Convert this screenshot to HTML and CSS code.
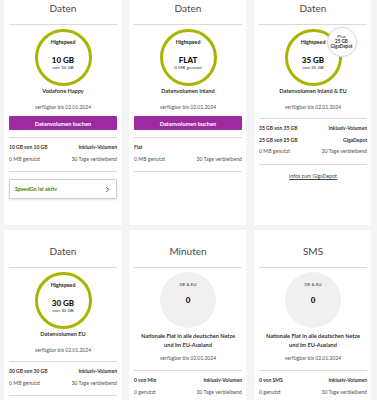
FILE: index.html
```html
<!DOCTYPE html>
<html lang="de">
<head>
<meta charset="utf-8">
<title>Tarif</title>
<link rel="stylesheet" href="styles.css">
</head>
<body>
<main class="grid">
  <section class="card">
    <h2 class="card-title">Daten</h2>
    <div class="ring">
      <span class="ring-label">Highspeed</span>
      <span class="ring-value">10 GB</span>
      <span class="ring-sub">von 10 GB</span>
    </div>
    <p class="plan">Vodafone Happy</p>
    <p class="avail">verfügbar bis 02.01.2024</p>
    <button class="buy">Datenvolumen buchen</button>
    <div class="stats">
      <div class="stat-row strong"><span>10 GB von 10 GB</span><span>Inklusiv-Volumen</span></div>
      <div class="stat-row"><span>0 MB genutzt</span><span>30 Tage verbleibend</span></div>
    </div>
    <a class="speedgo" href="#"><span>SpeedGo ist aktiv</span>
      <svg class="chev" viewBox="0 0 6 8" width="5" height="7"><path d="M1.5 1l3 3-3 3" fill="none" stroke="#333" stroke-width="1"/></svg>
    </a>
  </section>

  <section class="card">
    <h2 class="card-title">Daten</h2>
    <div class="ring">
      <span class="ring-label">Highspeed</span>
      <span class="ring-value">FLAT</span>
      <span class="ring-sub">0 MB genutzt</span>
    </div>
    <p class="plan">Datenvolumen Inland</p>
    <p class="avail">verfügbar bis 02.01.2024</p>
    <button class="buy">Datenvolumen buchen</button>
    <div class="stats">
      <div class="stat-row strong"><span>Flat</span></div>
      <div class="stat-row"><span>0 MB genutzt</span><span>30 Tage verbleibend</span></div>
    </div>
  </section>

  <section class="card">
    <h2 class="card-title">Daten</h2>
    <div class="ring">
      <span class="ring-label">Highspeed</span>
      <span class="ring-value">35 GB</span>
      <span class="ring-sub">von 35 GB</span>
      <span class="badge">Plus<br><b>25 GB</b><br><b>GigaDepot</b></span>
    </div>
    <p class="plan">Datenvolumen Inland &amp; EU</p>
    <p class="avail">verfügbar bis 02.01.2024</p>
    <div class="stats">
      <div class="stat-row strong"><span>35 GB von 35 GB</span><span>Inklusiv-Volumen</span></div>
      <div class="stat-row strong"><span>25 GB von 25 GB</span><span>GigaDepot</span></div>
      <div class="stat-row"><span>0 MB genutzt</span><span>30 Tage verbleibend</span></div>
    </div>
    <a class="info-link" href="#">Infos zum GigaDepot</a>
  </section>

  <section class="card">
    <h2 class="card-title">Daten</h2>
    <div class="ring">
      <span class="ring-label">Highspeed</span>
      <span class="ring-value">30 GB</span>
      <span class="ring-sub">von 30 GB</span>
    </div>
    <p class="plan">Datenvolumen EU</p>
    <p class="avail">verfügbar bis 02.01.2024</p>
    <div class="stats">
      <div class="stat-row strong"><span>30 GB von 30 GB</span><span>Inklusiv-Volumen</span></div>
      <div class="stat-row"><span>0 MB genutzt</span><span>30 Tage verbleibend</span></div>
    </div>
  </section>

  <section class="card">
    <h2 class="card-title">Minuten</h2>
    <div class="disc">
      <span class="disc-label">DE &amp; EU</span>
      <span class="disc-value">0</span>
    </div>
    <p class="plan plan-two">Nationale Flat in alle deutschen Netze und im EU-Ausland</p>
    <p class="avail avail-two">verfügbar bis 02.01.2024</p>
    <div class="stats stats-two">
      <div class="stat-row strong"><span>0 von Min</span><span>Inklusiv-Volumen</span></div>
      <div class="stat-row"><span>0 genutzt</span><span>30 Tage verbleibend</span></div>
    </div>
  </section>

  <section class="card">
    <h2 class="card-title">SMS</h2>
    <div class="disc">
      <span class="disc-label">DE &amp; EU</span>
      <span class="disc-value">0</span>
    </div>
    <p class="plan plan-two">Nationale Flat in alle deutschen Netze und im EU-Ausland</p>
    <p class="avail avail-two">verfügbar bis 02.01.2024</p>
    <div class="stats stats-two">
      <div class="stat-row strong"><span>0 von SMS</span><span>Inklusiv-Volumen</span></div>
      <div class="stat-row"><span>0 genutzt</span><span>30 Tage verbleibend</span></div>
    </div>
  </section>
</main>
</body>
</html>
```
FILE: styles.css
```css
* { box-sizing: border-box; }
html, body {
  margin: 0;
  padding: 0;
  background: #f4f4f4;
  font-family: Lato, "Open Sans", sans-serif;
  color: #333;
  overflow: hidden;
}
.grid {
  display: grid;
  grid-template-columns: 117px 117px 117px;
  column-gap: 8px;
  row-gap: 5px;
  padding-left: 4px;
  margin-top: -13px;
  align-items: stretch;
}
.card {
  background: #fff;
  padding: 0 4px 26px 5px;
  display: flex;
  flex-direction: column;
  align-items: stretch;
  min-height: 238px;
}
.card-title {
  margin: 0;
  padding: 14px 0 9px;
  height: 38px;
  line-height: 14px;
  font-size: 10px;
  font-weight: 400;
  text-align: center;
  color: #4a4a4a;
  border-bottom: 1px solid #d9d9d9;
}
.ring {
  position: relative;
  align-self: center;
  width: 57px;
  height: 57px;
  margin-top: 4px;
  border: 3.5px solid #a8b400;
  border-radius: 50%;
  padding-top: 6.5px;
  display: flex;
  flex-direction: column;
  align-items: center;
}
.ring-label {
  font-size: 5.2px;
  line-height: 6px;
  font-weight: 700;
  margin-bottom: 11.5px;
  color: #222;
}
.ring-value {
  font-size: 8px;
  line-height: 9px;
  font-weight: 900;
  color: #111;
}
.ring-sub {
  font-size: 4.6px;
  line-height: 5px;
  color: #333;
}
.badge {
  position: absolute;
  left: 39px;
  top: -5px;
  width: 30px;
  height: 30px;
  border-radius: 50%;
  background: #fff;
  border: 1px solid #dcdcdc;
  box-shadow: 0 0 2px rgba(0,0,0,0.1);
  font-size: 4.6px;
  line-height: 5.4px;
  text-align: center;
  padding-top: 5.5px;
  color: #333;
}
.badge b { font-weight: 700; }
.plan {
  margin: 1px 0 0;
  font-size: 5.6px;
  line-height: 8px;
  font-weight: 700;
  text-align: center;
  color: #333;
}
.plan-two {
  margin-top: 2.5px;
  line-height: 9px;
  padding: 0 2px;
}
.avail {
  margin: 8px 0 0;
  font-size: 5.1px;
  line-height: 8px;
  text-align: center;
  color: #555;
}
.avail-two { margin-top: 5.5px; }
.buy {
  margin-top: 5px;
  height: 14px;
  border: 0;
  border-radius: 1px;
  background: #9c2aa0;
  color: #fff;
  font-family: inherit;
  font-size: 5.6px;
  font-weight: 700;
  padding: 0;
}
.stats {
  margin-top: 7px;
  border-top: 1px solid #d9d9d9;
  border-bottom: 1px solid #d9d9d9;
  padding: 4px 0 6px;
}
.stats-two { margin-top: 8px; }
.stat-row {
  display: flex;
  justify-content: space-between;
  font-size: 5.2px;
  line-height: 11.5px;
  color: #555;
}
.stat-row.strong {
  font-size: 5px;
  font-weight: 700;
  color: #333;
}
.speedgo {
  margin-top: 7px;
  height: 20px;
  border: 1px solid #cfcfcf;
  border-radius: 1px;
  box-shadow: 0 1px 2px rgba(0,0,0,0.12);
  display: flex;
  align-items: center;
  justify-content: space-between;
  padding: 0 6px 0 5px;
  text-decoration: none;
  color: #428600;
  font-size: 5.4px;
  font-weight: 700;
}
.chev { display: block; }
.info-link {
  margin-top: 7px;
  font-size: 5.2px;
  line-height: 8px;
  text-align: center;
  color: #444;
  text-decoration: underline;
}
.disc {
  align-self: center;
  width: 56px;
  height: 56px;
  margin-top: 4px;
  border-radius: 50%;
  background: #f0f0f0;
  display: flex;
  flex-direction: column;
  align-items: center;
  padding-top: 10px;
}
.disc-label {
  font-size: 4.4px;
  line-height: 6px;
  color: #333;
  margin-bottom: 7px;
}
.disc-value {
  font-size: 8px;
  line-height: 10px;
  font-weight: 900;
  color: #111;
}
```
